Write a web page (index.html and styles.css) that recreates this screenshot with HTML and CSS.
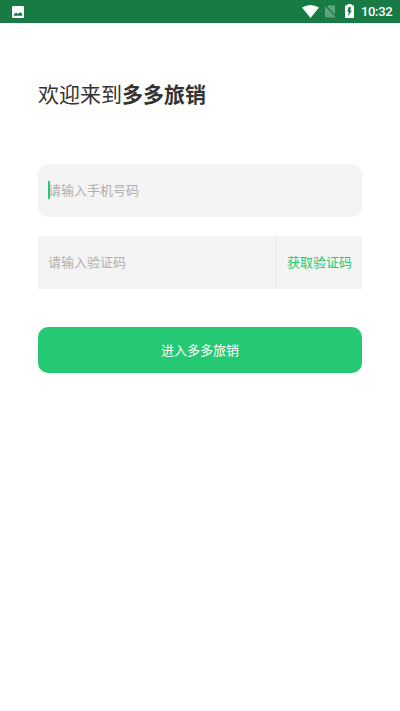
FILE: index.html
```html
<!DOCTYPE html>
<html lang="zh-CN">
<head>
<meta charset="utf-8">
<title>多多旅销</title>
<link rel="stylesheet" href="styles.css">
</head>
<body>
<header class="status-bar">
  <svg class="picture" viewBox="0 0 12 12"><path fill="#fff" fill-rule="evenodd" d="M1.2 0h9.6Q12 0 12 1.2v9.6Q12 12 10.8 12H1.2Q0 12 0 10.8V1.2Q0 0 1.2 0ZM2 9.7h8.2V7.8L8 6 6.2 8 4 6.6 2 8.6Z"/></svg>
  <div class="status-icons">
    <svg class="wifi" viewBox="0 0 17 13"><path fill="#fff" d="M0 2.6Q8.5-2.6 17 2.6L8.5 13Z"/></svg>
    <svg class="sim" viewBox="0 0 12 13"><path fill="#5da27e" d="M1 3.5 4.5.3H10q1 0 1 1v10.2q0 1-1 1H2q-1 0-1-1Z"/><path fill="none" stroke="#187b46" stroke-width="1.3" d="M1 .2 12 11.8"/><path fill="none" stroke="#5da27e" stroke-width="1" d="m.3 1.3 11.2 11.4"/></svg>
    <svg class="battery" viewBox="0 0 9 14"><path fill="#fff" d="M2.5 0h4v1.3h1.7Q9 1.3 9 2.1v11.1q0 .8-.8.8H.8Q0 14 0 13.2V2.1q0-.8.8-.8h1.7Z"/><path fill="#187b46" d="M6.3 3.2H3.5L2.3 7.8h1.6L3.1 12.2 6.9 6.7H5.1Z"/></svg>
    <time class="clock">10:32</time>
  </div>
</header>
<main class="login">
  <h1 class="title">欢迎来到<b>多多旅销</b></h1>
  <div class="field phone"><span class="caret"></span><span class="placeholder">请输入手机号码</span></div>
  <div class="field code"><span class="placeholder">请输入验证码</span><button class="get-code">获取验证码</button></div>
  <button class="submit">进入多多旅销</button>
</main>
</body>
</html>
```
FILE: styles.css
```css
* { box-sizing: border-box; }
body { margin: 0; background: #fff; font-family: "Noto Sans CJK SC", sans-serif; }
button { border: 0; padding: 0 0 2px; font-family: inherit; }
.status-bar { display: flex; align-items: center; justify-content: space-between; height: 23px; padding: 0 8px 0 12px; background: #187b46; }
.status-icons { display: flex; align-items: center; }
.picture { width: 12px; height: 12px; }
.wifi { width: 17px; height: 13px; margin-right: 5px; }
.sim { width: 12px; height: 13px; margin-right: 9px; }
.battery { width: 9px; height: 14px; margin: -1px 7px 0 0; }
.clock { width: 31px; color: #fff; font: 500 13px/23px Roboto, sans-serif; letter-spacing: -.35px; white-space: nowrap; }
.login { display: flex; flex-direction: column; padding: 53px 38px 0; }
.title { margin: 0 0 54px; color: #333; font-size: 21px; font-weight: 400; line-height: 34px; }
.title b { font-weight: 700; }
.field { display: flex; align-items: center; height: 53px; padding: 0 0 2px 10px; background: #f4f4f4; font-size: 13px; }
.phone { border-radius: 10px; margin-bottom: 19px; }
.placeholder { color: #b0b0b0; line-height: 20px; }
.caret { width: 2px; height: 18px; margin-right: -2px; background: #25c973; z-index: 1; }
.code { justify-content: space-between; margin-bottom: 38px; }
.get-code { width: 86px; height: 53px; margin-bottom: -2px; border-left: 1px solid #ececec; background: transparent; color: #25c973; font-size: 13px; }
.submit { height: 46px; border-radius: 10px; background: #25c973; color: #fff; font-size: 13px; }
```
